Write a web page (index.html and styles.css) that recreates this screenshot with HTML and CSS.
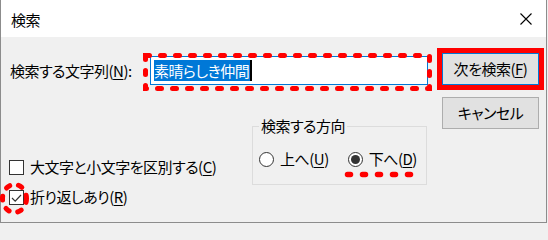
FILE: index.html
```html
<!DOCTYPE html>
<html lang="ja">
<head>
<meta charset="utf-8">
<title>検索</title>
<link rel="stylesheet" href="styles.css">
</head>
<body>
<div class="dialog">
  <div class="titlebar">
    <span class="title">検索</span>
    <svg class="close" width="12" height="12" viewBox="0 0 12 12"><path d="M0.5 0.5 L11.5 11.5 M11.5 0.5 L0.5 11.5" stroke="#000" stroke-width="1.1" fill="none"/></svg>
  </div>
  <div class="content">
    <div class="main">
      <div class="find-row">
        <span class="find-label">検索する文字列(<u>N</u>):</span>
        <div class="edit-wrap">
          <div class="edit"><span class="sel">素晴らしき仲間</span><span class="caret"></span></div>
          <svg class="mark mark-edit" width="289" height="38" viewBox="0 0 289 38"><rect x="2.5" y="2.5" width="284" height="33" fill="none" stroke="#f00" stroke-width="5" stroke-dasharray="4 11" stroke-linecap="round"/></svg>
        </div>
      </div>
      <div class="options">
        <div class="checks">
          <div class="check"><span class="box"></span><span>大文字と小文字を区別する(<u>C</u>)</span></div>
          <div class="check">
            <span class="box"><svg width="13" height="13" viewBox="0 0 13 13"><path d="M2 7 L5.2 10.2 L11 4" stroke="#333" stroke-width="1.2" fill="none"/></svg></span><span>折り返しあり(<u>R</u>)</span>
            <svg class="mark mark-check" width="30" height="36" viewBox="0 0 30 36"><ellipse cx="14.5" cy="17.5" rx="12" ry="14" fill="none" stroke="#f00" stroke-width="5" stroke-dasharray="4 9" stroke-linecap="round"/></svg>
          </div>
        </div>
        <fieldset class="group">
          <legend>検索する方向</legend>
          <div class="radios">
            <span class="radio"><span class="ring"></span>上へ(<u>U</u>)</span>
            <span class="radio"><span class="ring on"></span>下へ(<u>D</u>)<svg class="mark mark-under" width="70" height="7" viewBox="0 0 70 7"><line x1="3.5" y1="3.5" x2="66.5" y2="3.5" stroke="#f00" stroke-width="5.5" stroke-dasharray="3 12" stroke-linecap="round"/></svg></span>
          </div>
        </fieldset>
      </div>
    </div>
    <div class="buttons">
      <div class="btn default">次を検索(<u>F</u>)</div>
      <div class="btn">キャンセル</div>
    </div>
  </div>
</div>
</body>
</html>
```
FILE: styles.css
```css
* { box-sizing: border-box; }
html, body { height: 224px; overflow: hidden; }
body {
  margin: 0;
  font-family: "Noto Sans CJK JP", "Noto Sans", sans-serif;
  font-size: 15px;
  letter-spacing: -0.5px;
  font-feature-settings: "palt";
  color: #000;
  background: #f0f0f0;
}
u { text-underline-offset: 2px; text-decoration-thickness: 1px; }
.dialog {
  width: 547px;
  height: 223px;
  border-left: 1px solid #8c8c8c;
  border-right: 1px solid #8c8c8c;
  border-bottom: 1px solid #8c8c8c;
  background: #f0f0f0;
  display: flex;
  flex-direction: column;
}
.titlebar {
  height: 37px;
  background: #fff;
  display: flex;
  align-items: center;
  justify-content: space-between;
  padding: 3px 14px 0 10px;
}
.title { line-height: 20px; }
.close { display: block; margin-top: -3px; }
.content {
  flex: 1;
  display: flex;
  align-items: flex-start;
  padding-left: 9px;
}
.main { width: 418px; }
.find-row {
  display: flex;
  align-items: center;
  margin-top: 19px;
  height: 29px;
}
.find-label { width: 140px; line-height: 20px; }
.edit-wrap { position: relative; width: 278px; height: 29px; }
.edit {
  height: 100%;
  border: 1px solid #0078d7;
  background: #fff;
  display: flex;
  align-items: center;
  padding-left: 3px;
}
.sel { background: #0078d7; color: #fff; line-height: 21px; padding-right: 1px; }
.caret { width: 2px; height: 21px; background: #000; }
.mark { position: absolute; display: block; }
.mark-edit { left: -7px; top: -3px; }
.options { display: flex; justify-content: space-between; align-items: flex-start; }
.checks {
  margin-left: -1px;
  padding-top: 72px;
  display: flex;
  flex-direction: column;
  gap: 10px;
}
.check { position: relative; display: flex; align-items: center; height: 20px; line-height: 20px; }
.box {
  width: 15px;
  height: 15px;
  border: 1px solid #333;
  background: #fff;
  margin-right: 6px;
  display: block;
}
.box svg { display: block; }
.mark-check { left: -9px; top: -6.5px; }
.group {
  margin: 33px 1px 0 0;
  width: 175px;
  border: 1px solid #dcdcdc;
  padding: 15px 6px 15px 6px;
  min-width: 0;
}
.group legend { padding: 0 2px; line-height: 16px; }
.radios { display: flex; align-items: center; height: 20px; line-height: 20px; }
.radio { position: relative; display: flex; align-items: center; }
.radio + .radio { margin-left: 19px; }
.ring {
  width: 15px;
  height: 15px;
  border: 1px solid #333;
  border-radius: 50%;
  background: #fff;
  margin-right: 6px;
  position: relative;
}
.ring.on::after {
  content: "";
  position: absolute;
  inset: 2px;
  border-radius: 50%;
  background: #333;
}
.mark-under { left: -4px; top: 22px; }
.buttons {
  margin-left: 14px;
  padding-top: 16px;
  display: flex;
  flex-direction: column;
  gap: 12px;
}
.btn {
  width: 97px;
  height: 32px;
  border: 1px solid #adadad;
  background: #e1e1e1;
  display: flex;
  align-items: center;
  justify-content: center;
  line-height: 20px;
}
.btn.default { border-color: #0078d7; outline: 5px solid #f00; }
```
